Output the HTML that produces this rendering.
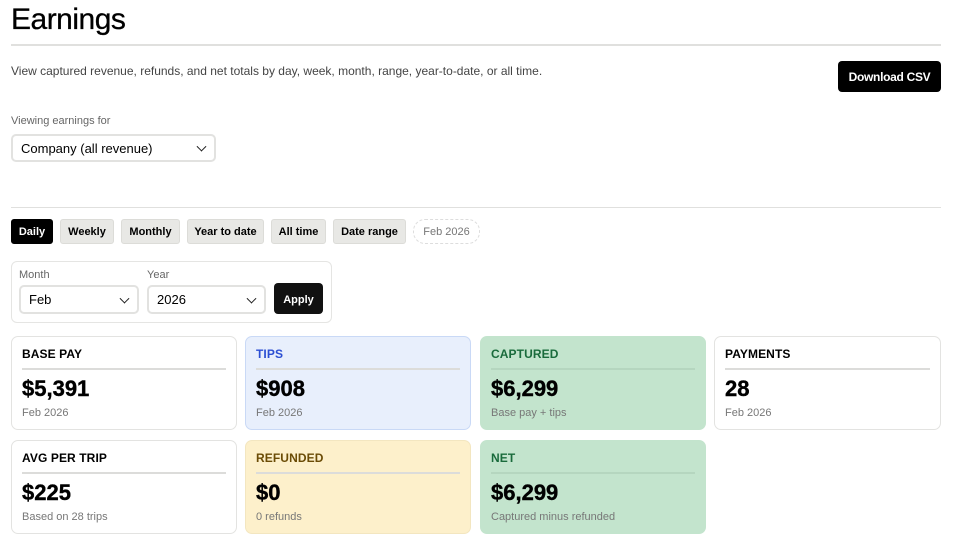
<!DOCTYPE html>
<html><head><meta charset="utf-8"><style>
*{box-sizing:border-box;margin:0;padding:0}
body{width:954px;height:546px;background:#fff;font-family:"Liberation Sans",Arial,sans-serif;color:#000;position:relative;overflow:hidden}
.a{position:absolute}
h1{position:absolute;left:11px;top:3px;font-size:30px;font-weight:400;letter-spacing:-0.5px;-webkit-text-stroke:0.3px #000}
.hr{position:absolute;left:11px;width:930px;height:2px;background:#e0e0de}
.sel{position:absolute;border:2px solid #e2e2e0;border-radius:5px;background:#fff;font-size:13px;padding-left:8px;display:flex;align-items:center}
.chev{position:absolute;right:9px;top:50%;width:7px;height:7px;border-right:1.6px solid #222;border-bottom:1.6px solid #222;transform:translateY(-70%) rotate(45deg)}
.tab{position:absolute;top:219px;height:25px;border-radius:3px;background:#e8e8e5;border:1px solid #dcdcd8;font-size:11px;font-weight:700;display:flex;align-items:center;justify-content:center;padding-top:1px}
.card{position:absolute;width:226px;height:94px;border:1.5px solid #e3e3e1;border-radius:7px;background:#fff}
.card .l{position:absolute;left:10px;top:10px;font-size:12px;font-weight:900;letter-spacing:0.1px}
.card .ln{position:absolute;left:10px;right:10px;top:31px;height:2px;background:#dcdcda}
.card .v{position:absolute;left:10px;top:39px;font-size:22px;font-weight:900;-webkit-text-stroke:0.4px #000}
.card .s{position:absolute;left:10px;top:70px;font-size:11px;color:#777}
.blue{background:#e8effc;border-color:#c9d9f6}
.green{background:#c3e4cd;border-color:#c3e4cd}
.yel{background:#fdf0cb;border-color:#f3e6c0}
</style></head><body>
<h1>Earnings</h1>
<div class="hr" style="top:44px"></div>
<div class="a" style="left:11px;top:64px;font-size:12px;color:#444">View captured revenue, refunds, and net totals by day, week, month, range, year-to-date, or all time.</div>
<div class="a" style="left:838px;top:61px;width:103px;height:31px;background:#000;color:#fff;border-radius:4px;font-size:12px;font-weight:700;display:flex;align-items:center;justify-content:center;letter-spacing:-0.3px">Download CSV</div>
<div class="a" style="left:11px;top:115px;font-size:11px;color:#666">Viewing earnings for</div>
<div class="sel" style="left:11px;top:134px;width:205px;height:28px">Company (all revenue)<span class="chev"></span></div>
<div class="hr" style="top:207px;height:1px"></div>
<div class="tab" style="left:11px;width:42px;background:#000;color:#fff;border-color:#000">Daily</div>
<div class="tab" style="left:60px;width:54px">Weekly</div>
<div class="tab" style="left:121px;width:59px">Monthly</div>
<div class="tab" style="left:187px;width:77px">Year to date</div>
<div class="tab" style="left:271px;width:55px">All time</div>
<div class="tab" style="left:333px;width:73px">Date range</div>
<div class="tab" style="left:413px;width:67px;background:#fff;border:1px dashed #ddd;border-radius:12px;font-weight:400;color:#777">Feb 2026</div>
<div class="a" style="left:11px;top:261px;width:321px;height:62px;border:1.5px solid #e5e5e3;border-radius:6px"></div>
<div class="a" style="left:19px;top:269px;font-size:11px;color:#666">Month</div>
<div class="a" style="left:147px;top:269px;font-size:11px;color:#666">Year</div>
<div class="sel" style="left:19px;top:285px;width:120px;height:29px">Feb<span class="chev"></span></div>
<div class="sel" style="left:147px;top:285px;width:119px;height:29px">2026<span class="chev"></span></div>
<div class="a" style="left:274px;top:283px;width:49px;height:31px;background:#111;color:#fff;border-radius:4px;font-size:11px;font-weight:700;display:flex;align-items:center;justify-content:center;padding-top:2px">Apply</div>

<div class="card" style="left:11px;top:336px"><div class="l">BASE PAY</div><div class="ln"></div><div class="v">$5,391</div><div class="s">Feb 2026</div></div>
<div class="card blue" style="left:245px;top:336px"><div class="l" style="color:#2c4fd3">TIPS</div><div class="ln"></div><div class="v">$908</div><div class="s">Feb 2026</div></div>
<div class="card green" style="left:480px;top:336px"><div class="l" style="color:#1a6b3c">CAPTURED</div><div class="ln" style="background:#b5d6bf"></div><div class="v">$6,299</div><div class="s">Base pay + tips</div></div>
<div class="card" style="left:714px;top:336px;width:227px"><div class="l">PAYMENTS</div><div class="ln"></div><div class="v">28</div><div class="s">Feb 2026</div></div>
<div class="card" style="left:11px;top:440px"><div class="l">AVG PER TRIP</div><div class="ln"></div><div class="v">$225</div><div class="s">Based on 28 trips</div></div>
<div class="card yel" style="left:245px;top:440px"><div class="l" style="color:#6b4c06">REFUNDED</div><div class="ln"></div><div class="v">$0</div><div class="s">0 refunds</div></div>
<div class="card green" style="left:480px;top:440px"><div class="l" style="color:#1a6b3c">NET</div><div class="ln" style="background:#b5d6bf"></div><div class="v">$6,299</div><div class="s">Captured minus refunded</div></div>
</body></html>
